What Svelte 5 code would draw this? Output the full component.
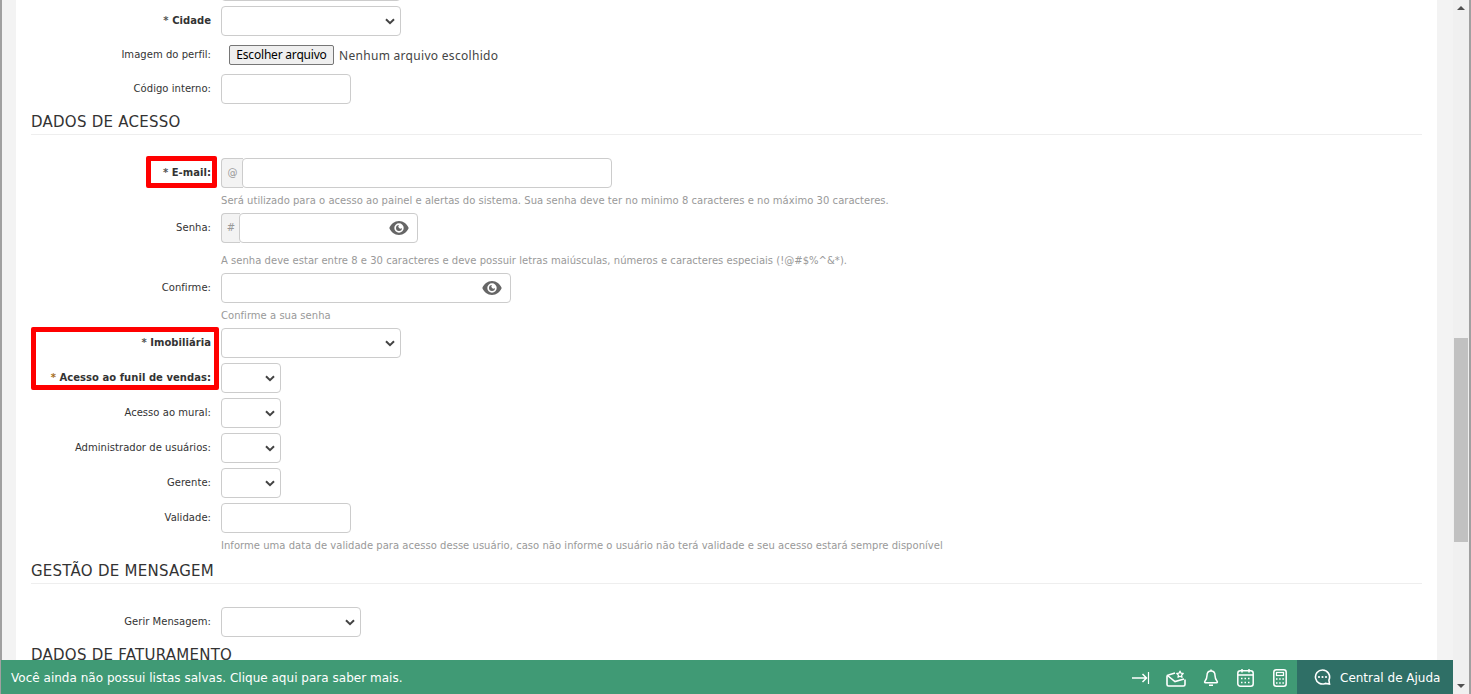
<script>
	const yesNoRows = [
		{ label: 'Acesso ao mural:' },
		{ label: 'Administrador de usuários:' },
		{ label: 'Gerente:' }
	];
</script>

<div class="window">
	<div class="edge"></div>
	<div class="gutter"></div>

	<main class="content">
		<div class="scrolled">
			<div class="row">
				<div class="label"></div>
				<select class="w180"></select>
			</div>

			<div class="row">
				<label class="label req" for="cidade"><span class="star">*</span> Cidade</label>
				<select id="cidade" class="w180"></select>
			</div>

			<div class="row file">
				<span class="label">Imagem do perfil:</span>
				<button class="file-btn" type="button">Escolher arquivo</button>
				<span class="file-name">Nenhum arquivo escolhido</span>
			</div>

			<div class="row">
				<label class="label" for="codigo">Código interno:</label>
				<input id="codigo" class="w130" type="text" />
			</div>

			<h3>DADOS DE ACESSO</h3>

			<div class="row">
				<label class="label req" for="email"><span class="star">*</span> E-mail:</label>
				<span class="addon at">@</span>
				<input id="email" class="email" type="text" />
				<div class="mark mark-email"></div>
			</div>
			<p class="hint">Será utilizado para o acesso ao painel e alertas do sistema. Sua senha deve ter no minimo 8 caracteres e no máximo 30 caracteres.</p>

			<div class="row">
				<label class="label" for="senha">Senha:</label>
				<span class="addon hash">#</span>
				<div class="pass senha">
					<input id="senha" type="password" />
					<svg class="eye" viewBox="0 0 20 16" width="20" height="16"><path fill-rule="evenodd" d="M10 1C5.500 1 2 4.200.3 8 2 11.800 5.500 15 10 15s8-3.200 9.700-7C18 4.200 14.500 1 10 1zm0 2.300a4.700 4.700 0 1 1 0 9.400 4.700 4.700 0 0 1 0-9.400z"/><path fill-rule="evenodd" d="M10 5a3 3 0 1 0 3 3 1.800 1.800 0 0 1-3-3z"/></svg>
				</div>
			</div>
			<p class="hint tall">A senha deve estar entre 8 e 30 caracteres e deve possuir letras maiúsculas, números e caracteres especiais (!@#$%^&amp;*).</p>

			<div class="row">
				<label class="label" for="confirme">Confirme:</label>
				<div class="pass confirme">
					<input id="confirme" type="password" />
					<svg class="eye" viewBox="0 0 20 16" width="20" height="16"><path fill-rule="evenodd" d="M10 1C5.500 1 2 4.200.3 8 2 11.800 5.500 15 10 15s8-3.200 9.700-7C18 4.200 14.500 1 10 1zm0 2.300a4.700 4.700 0 1 1 0 9.400 4.700 4.700 0 0 1 0-9.400z"/><path fill-rule="evenodd" d="M10 5a3 3 0 1 0 3 3 1.800 1.800 0 0 1-3-3z"/></svg>
				</div>
			</div>
			<p class="hint">Confirme a sua senha</p>

			<div class="row">
				<label class="label req" for="imobiliaria"><span class="star">*</span> Imobiliária</label>
				<select id="imobiliaria" class="w180"></select>
				<div class="mark mark-group"></div>
			</div>

			<div class="row">
				<label class="label req" for="funil"><span class="star orange">*</span> Acesso ao funil de vendas:</label>
				<select id="funil" class="w60"></select>
			</div>

			{#each yesNoRows as row}
				<div class="row">
					<span class="label">{row.label}</span>
					<select class="w60"></select>
				</div>
			{/each}

			<div class="row">
				<label class="label" for="validade">Validade:</label>
				<input id="validade" class="w130" type="text" />
			</div>
			<p class="hint">Informe uma data de validade para acesso desse usuário, caso não informe o usuário não terá validade e seu acesso estará sempre disponível</p>

			<h3>GESTÃO DE MENSAGEM</h3>

			<div class="row">
				<label class="label" for="gerir">Gerir Mensagem:</label>
				<select id="gerir" class="w140"></select>
			</div>

			<h3>DADOS DE FATURAMENTO</h3>
		</div>
	</main>

	<div class="gutter right"></div>

	<div class="scrollbar">
		<span class="arrow up"></span>
		<div class="thumb"></div>
		<span class="arrow down"></span>
	</div>
	<div class="edge"></div>

	<footer class="bar">
		<span class="bar-msg">Você ainda não possui listas salvas. Clique aqui para saber mais.</span>
		<div class="tools">
			<svg viewBox="0 0 18 14" width="18" height="14" fill="none" stroke="currentColor" stroke-width="1.500"><path d="M0 8h14M10.500 4l4 4-4 4" /><path d="M16.500 2v12" stroke-width="1.200" /></svg>
			<svg viewBox="0 0 20 20" width="20" height="20" fill="none" stroke="currentColor" stroke-width="1.600"><path d="M9 6 2.500 8A1.500 1.500 0 0 0 1 9.500V17.500A1.500 1.500 0 0 0 2.500 19H17.500A1.500 1.500 0 0 0 19 17.500V12.500" /><path d="M1.500 8.500 9 14.500 18 12" /><path d="M14 4.200 15 6.200 17.200 6.500 15.600 8.100 16 10.300 14 9.200 12 10.300 12.400 8.100 10.800 6.500 13 6.200z" stroke-width="1.300" stroke-linejoin="round" /></svg>
			<svg viewBox="0 0 18 18" width="18" height="18" fill="none" stroke="currentColor" stroke-width="1.500"><path d="M9 3C6.200 3 5 5 5 7.500 5 10.500 4 12 2.800 13.500c-.4.500-.2 1.300.5 1.300h11.400c.7 0 .9-.8.500-1.300C14 12 13 10.500 13 7.500 13 5 11.800 3 9 3z" /><path d="M9 1.500V3M7 17.200h4" /></svg>
			<svg viewBox="0 0 19 20" width="19" height="20" fill="none" stroke="currentColor" stroke-width="1.500"><rect x="1.800" y="3.800" width="15.400" height="15.400" rx="2.500" /><path d="M2 8h15M6 2v3.500M13 2v3.500" /><path d="M5 11.500h9M5 15.500h9" stroke-dasharray="1.500 2" /></svg>
			<svg viewBox="0 0 18 20" width="18" height="20" fill="none" stroke="currentColor" stroke-width="1.500"><rect x="2.800" y="2.800" width="12.400" height="16.400" rx="2.500" /><rect x="5.500" y="5.500" width="7" height="3" stroke-width="1.200" /><path d="M5 12h8M5 16h8" stroke-dasharray="1.500 1.700" /></svg>
		</div>
		<div class="help">
			<svg viewBox="0 0 17 16" width="17" height="16"><path d="M8.500 1a7 7 0 1 0 2.800 13.400L15.500 15l-.6-4A7 7 0 0 0 8.500 1z" fill="none" stroke="currentColor" stroke-width="1.600"/><circle cx="5" cy="8" r="1.100" fill="currentColor"/><circle cx="8.500" cy="8" r="1.100" fill="currentColor"/><circle cx="12" cy="8" r="1.100" fill="currentColor"/></svg>
			<span class="help-text">Central de Ajuda</span>
		</div>
	</footer>
</div>

<style>
	:global(body) {
		margin: 0;
		overflow: hidden;
	}

	.window {
		position: relative;
		display: flex;
		width: 1471px;
		height: 694px;
		overflow: hidden;
		font-family: "DejaVu Sans", Verdana, sans-serif;
		color: #333;
		background: #fff;
	}

	.edge {
		flex: 0 0 2px;
		background: #a0a0a0;
	}

	.gutter {
		flex: 0 0 14px;
		background: #f3f3f3;
	}
	.gutter.right {
		flex: 0 0 16px;
	}

	.content {
		flex: 0 0 1421px;
		padding: 0 15px;
		box-sizing: border-box;
		overflow: hidden;
		background: #fff;
	}

	/* page is scrolled down a bit in the shot */
	.scrolled {
		margin-top: -29px;
	}

	.row {
		position: relative;
		display: flex;
		align-items: center;
		height: 30px;
		margin-bottom: 5px;
	}

	.row.file {
		height: 28px;
	}

	.label {
		flex: 0 0 180px;
		margin-right: 10px;
		text-align: right;
		font-size: 10px;
		letter-spacing: 0.04px;
		line-height: 14px;
		color: #333;
	}

	.req {
		font-weight: 700;
	}

	.star {
		color: #555;
	}
	.star.orange {
		color: #a5701f;
	}

	input,
	select {
		box-sizing: border-box;
		height: 30px;
		margin: 0;
		border: 1px solid #ccc;
		border-radius: 4px;
		background: #fff;
		color: #333;
		outline: none;
	}

	select {
		appearance: none;
		background: #fff url("data:image/svg+xml,%3Csvg xmlns='http://www.w3.org/2000/svg' width='10' height='7'%3E%3Cpath d='M1 1.200 5 5.200 9 1.200' fill='none' stroke='%23444' stroke-width='2'/%3E%3C/svg%3E") no-repeat right 5px center;
	}

	.w60 { width: 60px; }
	.w130 { width: 130px; }
	.w140 { width: 140px; }
	.w180 { width: 180px; }

	.file-btn {
		box-sizing: border-box;
		width: 105px;
		height: 20px;
		margin: 0 5px 0 8px;
		padding: 0;
		border: 1px solid #767676;
		border-radius: 2px;
		background: #efefef;
		color: #000;
		font-family: "Noto Sans", sans-serif;
		font-size: 12px;
		letter-spacing: -0.2px;
		line-height: 18px;
	}

	.file-name {
		font-family: "Noto Sans", sans-serif;
		font-size: 12px;
		letter-spacing: 0.3px;
		color: #444;
	}

	h3 {
		margin: 0 0 23px;
		height: 26px;
		box-sizing: border-box;
		border-bottom: 1px solid #eee;
		font-size: 15px;
		font-weight: 400;
		letter-spacing: 0.25px;
		line-height: 26px;
		color: #333;
	}

	.addon {
		box-sizing: border-box;
		height: 30px;
		border: 1px solid #ccc;
		border-right: 0;
		border-radius: 4px 0 0 4px;
		background: #f3f3f3;
		color: #999;
		font-size: 10px;
		line-height: 28px;
		text-align: center;
	}
	.addon.at { flex: 0 0 22px; }
	.addon.hash { flex: 0 0 19px; margin-right: -1px; }

	.email { width: 370px; margin-left: -1px; }

	.pass {
		position: relative;
		height: 30px;
	}
	.pass input {
		width: 100%;
		display: block;
	}
	.senha { width: 179px; }
	.confirme { width: 290px; }

	.eye {
		position: absolute;
		top: 7px;
		right: 9.500px;
		fill: #666;
	}

	.hint {
		margin: 0 0 5px 190px;
		height: 15px;
		font-size: 10px;
		letter-spacing: 0.03px;
		line-height: 15px;
		color: #999;
		white-space: nowrap;
	}
	.hint.tall {
		margin-top: 10px;
	}

	.mark {
		position: absolute;
		box-sizing: border-box;
		border: 5px solid #f00;
		border-radius: 2px;
		pointer-events: none;
	}
	.mark-email {
		left: 115px;
		top: -2px;
		width: 71px;
		height: 32px;
	}
	.mark-group {
		left: 0;
		top: -1px;
		width: 188px;
		height: 63px;
	}

	.scrollbar {
		position: relative;
		flex: 0 0 16px;
		background: #f0f0f0;
	}
	.thumb {
		position: absolute;
		top: 338px;
		left: 1px;
		width: 14px;
		height: 204px;
		background: #c1c1c1;
	}
	.arrow {
		position: absolute;
		left: 4px;
		border-left: 4px solid transparent;
		border-right: 4px solid transparent;
	}
	.arrow.up {
		top: 6px;
		border-bottom: 4px solid #505050;
	}
	.arrow.down {
		bottom: 6px;
		border-top: 4px solid #505050;
	}

	.bar {
		position: absolute;
		left: 1px;
		bottom: 0;
		width: 1452px;
		height: 34px;
		display: flex;
		align-items: center;
		background: #409a75;
		color: #fff;
		font-size: 12px;
	}

	.bar-msg {
		flex: 1;
		padding: 1px 0 0 10px;
		letter-spacing: 0.02px;
	}

	.tools {
		display: flex;
		align-items: center;
		gap: 16px;
		margin-right: 8px;
	}

	.help {
		display: flex;
		align-items: center;
		gap: 9px;
		width: 156px;
		height: 34px;
		box-sizing: border-box;
		padding-left: 17px;
		background: #2f6f66;
	}

	.help-text {
		padding-top: 1px;
	}
</style>
